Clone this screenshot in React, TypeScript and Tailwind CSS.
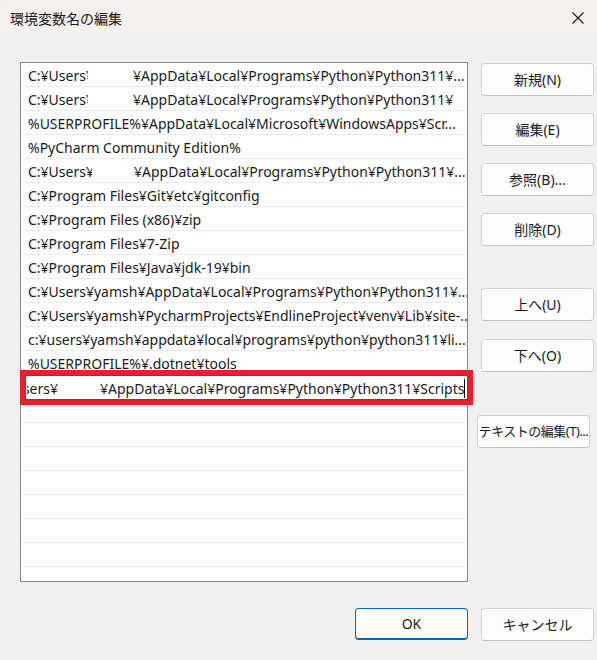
import React from "react";

type Row = {
	text?: string;
	prefix?: string;
	prefixW?: number;
	restAt?: number;
	rest?: string;
};

const rows: Row[] = [
	{ prefix: "C:¥Users¥", prefixW: 60, restAt: 105, rest: "¥AppData¥Local¥Programs¥Python¥Python311¥..." },
	{ prefix: "C:¥Users¥", prefixW: 60, restAt: 105, rest: "¥AppData¥Local¥Programs¥Python¥Python311¥" },
	{ text: "%USERPROFILE%¥AppData¥Local¥Microsoft¥WindowsApps¥Scr..." },
	{ text: "%PyCharm Community Edition%" },
	{ prefix: "C:¥Users¥y", prefixW: 64, restAt: 106, rest: "¥AppData¥Local¥Programs¥Python¥Python311¥..." },
	{ text: "C:¥Program Files¥Git¥etc¥gitconfig" },
	{ text: "C:¥Program Files (x86)¥zip" },
	{ text: "C:¥Program Files¥7-Zip" },
	{ text: "C:¥Program Files¥Java¥jdk-19¥bin" },
	{ text: "C:¥Users¥yamsh¥AppData¥Local¥Programs¥Python¥Python311¥..." },
	{ text: "C:¥Users¥yamsh¥PycharmProjects¥EndlineProject¥venv¥Lib¥site-..." },
	{ text: "c:¥users¥yamsh¥appdata¥local¥programs¥python¥python311¥li..." },
	{ text: "%USERPROFILE%¥.dotnet¥tools" },
];

const RowText = ({ row }: { row: Row }) => {
	if (row.text) return <span className="whitespace-nowrap">{row.text}</span>;
	return (
		<div className="flex whitespace-nowrap">
			<div className="overflow-hidden" style={{ width: row.prefixW }}>
				{row.prefix}
			</div>
			<div style={{ width: (row.restAt ?? 0) - (row.prefixW ?? 0) }} />
			<span>{row.rest}</span>
		</div>
	);
};

const Btn = ({ label, className = "" }: { label: string; className?: string }) => (
	<div
		className={`h-[33px] w-[113px] flex items-center justify-center rounded-[4px] border border-[#d1d1d1] border-b-[#c2c2c2] bg-[#fdfdfd] text-[14px] text-[#1b1b1b] ${className}`}
	>
		{label}
	</div>
);

export default function App() {
	return (
		<div
			className="w-[597px] h-[660px] bg-[#f0f0f0] flex flex-col overflow-hidden relative"
			style={{ fontFamily: '"Noto Sans", "Noto Sans CJK JP", sans-serif' }}
		>
			{/* title bar */}
			<div className="h-[36px] bg-[#f3f0ee] flex items-center justify-between pl-[10px] pr-[13px] shrink-0 rounded-tl-[8px]">
				<span className="text-[14px] text-[#1a1a1a]">環境変数名の編集</span>
				<svg width="12" height="12" viewBox="0 0 12 12">
					<path d="M0.5 0.5 L11.5 11.5 M11.5 0.5 L0.5 11.5" stroke="#1a1a1a" strokeWidth="1.1" />
				</svg>
			</div>

			<div className="flex pl-[20px] pt-[26px]">
				{/* list */}
				<div className="w-[448px] h-[520px] border border-[#828790] bg-white overflow-hidden text-[14px] text-[#1a1a1a]">
					{rows.map((r, i) => (
						<div key={i} className="h-[24px] border-b border-[#ececec] pl-[7px] pr-[3px] pt-[2px] flex items-center overflow-hidden">
							<RowText row={r} />
						</div>
					))}
					<div className="h-[24px] border-b border-[#ececec]" />
					{Array.from({ length: 8 }).map((_, i) => (
						<div key={i} className="h-[24px] border-b border-[#ececec]" />
					))}
				</div>

				{/* buttons */}
				<div className="flex flex-col pl-[13px] pt-[1px]">
					<Btn label="新規(N)" />
					<Btn label="編集(E)" className="mt-[17px]" />
					<Btn label="参照(B)..." className="mt-[17px]" />
					<Btn label="削除(D)" className="mt-[17px]" />
					<Btn label="上へ(U)" className="mt-[42px] h-[32px]" />
					<Btn label="下へ(O)" className="mt-[18px] h-[32px]" />
					<Btn label="テキストの編集(T)..." className="mt-[43px] h-[32px] -ml-[4px] whitespace-nowrap !text-[13px] tracking-[-0.5px]" />
				</div>
			</div>

			{/* bottom buttons */}
			<div className="flex justify-end gap-[13px] pr-[3px] pt-[26px]">
				<div className="h-[32px] w-[113px] flex items-center justify-center rounded-[4px] border border-[#0067c0] border-b-2 bg-[#fdfdfd] text-[14px] text-[#1b1b1b]">
					OK
				</div>
				<Btn label="キャンセル" className="h-[32px]" />
			</div>

			{/* edit field with red highlight */}
			<div className="absolute left-[20px] top-[370px] w-[453px] h-[35px] border-[5px] border-[#e8202a]">
				<div className="h-full w-full border border-[#505050] bg-white flex items-center pl-[1px] pt-[1px] overflow-hidden text-[14px] text-[#1a1a1a] whitespace-nowrap relative">
					<div className="w-[31px] overflow-hidden flex justify-end shrink-0">
						<span>sers¥</span>
					</div>
					<div className="w-[42px] shrink-0" />
					<span>¥AppData¥Local¥Programs¥Python¥Python311¥Scripts</span>
					<div className="absolute right-[2px] top-[3px] w-[1px] h-[19px] bg-black" />
				</div>
			</div>
		</div>
	);
}
